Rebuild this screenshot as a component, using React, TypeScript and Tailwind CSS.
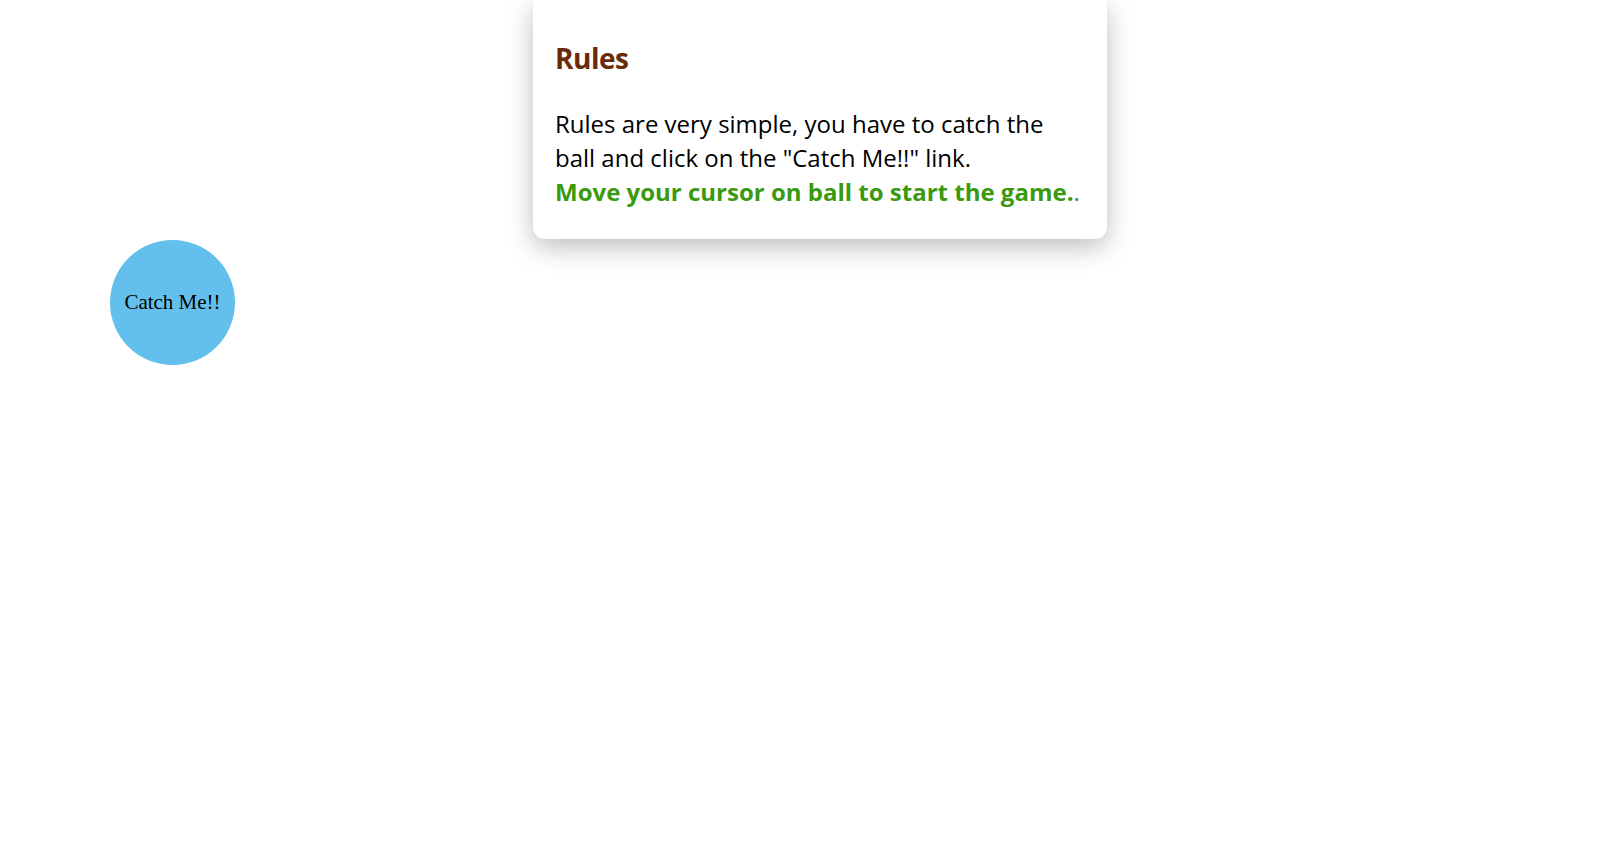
import React from "react";

export default function App() {
  return (
    <div className="min-h-screen bg-white">
      <div className="ml-[533px] w-[574px] rounded-b-xl bg-white px-[22px] pt-[41px] pb-[30px] shadow-[0_8px_26px_rgba(0,0,0,0.26)] font-['Open_Sans',sans-serif]">
        <h2 className="text-[28px] font-bold leading-[34px] tracking-[-0.5px] text-[#6b2a0a]">Rules</h2>
        <p className="mt-8 text-[24px] leading-[34px] text-black">
          Rules are very simple, you have to catch the ball and click on the "Catch Me!!" link.
          <br />
          <span className="font-bold text-[#3a9a0f]">Move your cursor on ball to start the game.</span>
          <span className="text-[#3a9a0f]">.</span>
        </p>
      </div>
      <div className="ml-[110px] mt-[1px] flex h-[125px] w-[125px] items-center justify-center rounded-full bg-[#63bfec]">
        <a href="#" className="font-['Liberation_Serif',serif] text-[21px] text-black">
          Catch Me!!
        </a>
      </div>
    </div>
  );
}
